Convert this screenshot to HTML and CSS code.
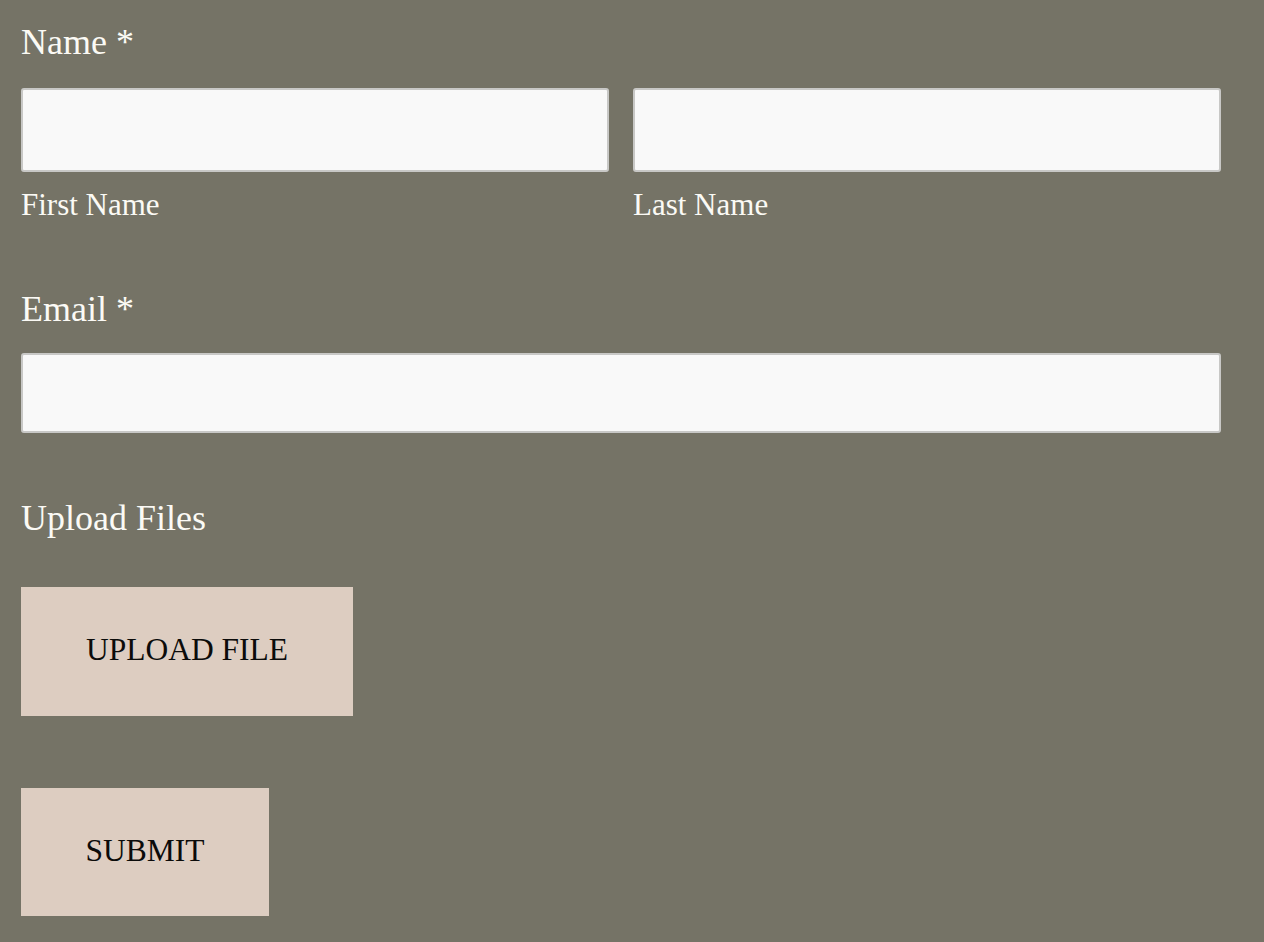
FILE: index.html
```html
<!DOCTYPE html>
<html lang="en">
<head>
<meta charset="utf-8">
<title>Form</title>
<link rel="stylesheet" href="styles.css">
</head>
<body>
<form class="form">
  <div class="field field-name">
    <label class="label">Name *</label>
    <div class="name-row">
      <div class="name-col">
        <input class="input input-name" type="text">
        <span class="sublabel">First Name</span>
      </div>
      <div class="name-col">
        <input class="input input-name" type="text">
        <span class="sublabel">Last Name</span>
      </div>
    </div>
  </div>
  <div class="field field-email">
    <label class="label">Email *</label>
    <input class="input input-email" type="email">
  </div>
  <div class="field field-upload">
    <label class="label">Upload Files</label>
    <button type="button" class="btn btn-upload">UPLOAD FILE</button>
  </div>
  <button type="button" class="btn btn-submit">SUBMIT</button>
</form>
</body>
</html>
```
FILE: styles.css
```css
html, body {
  margin: 0;
  padding: 0;
  background: #757366;
}
body {
  font-family: "Liberation Serif", "Times New Roman", serif;
  color: #fbfaf5;
  width: 1264px;
  height: 942px;
  overflow: hidden;
}
.form {
  padding: 21px 0 0 21px;
  width: 1200px;
  display: flex;
  flex-direction: column;
  align-items: flex-start;
}
.field {
  display: flex;
  flex-direction: column;
  width: 100%;
  align-items: flex-start;
}
.label {
  font-size: 36px;
  line-height: 43px;
  display: block;
}
.name-row {
  margin-top: 24px;
  display: grid;
  grid-template-columns: 588px 588px;
  column-gap: 24px;
  width: 100%;
}
.name-col {
  display: flex;
  flex-direction: column;
}
.input {
  box-sizing: border-box;
  display: block;
  background: #f9f9f9;
  border: 2px solid #c8c8c6;
  border-radius: 3px;
  margin: 0;
  padding: 0 16px;
  width: 100%;
  font-family: inherit;
  font-size: 24px;
}
.input-name {
  height: 84px;
}
.sublabel {
  margin-top: 15px;
  font-size: 31px;
  line-height: 36px;
  display: block;
}
.field-email {
  margin-top: 65px;
}
.input-email {
  margin-top: 22px;
  height: 80px;
}
.field-upload {
  margin-top: 64px;
}
.btn {
  box-sizing: border-box;
  font-family: "Liberation Serif", "Times New Roman", serif;
  font-size: 31.5px;
  line-height: 1;
  color: #0b0b0a;
  background: #ddcdc1;
  border: 0;
  border-radius: 0;
  padding: 0 64px 3px;
  margin: 0;
  display: flex;
  align-items: center;
  justify-content: center;
  cursor: pointer;
}
.btn-upload {
  margin-top: 47px;
  height: 129px;
  width: 332px;
}
.btn-submit {
  margin-top: 72px;
  height: 128px;
  width: 248px;
}
```
